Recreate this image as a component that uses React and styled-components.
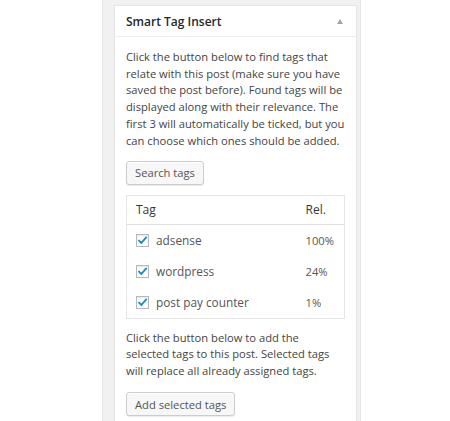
import React from 'react';
import styled, { createGlobalStyle } from 'styled-components';

const GlobalStyle = createGlobalStyle`
  html, body {
    margin: 0;
    padding: 0;
    background: #fff;
  }
  body {
    font-family: "Open Sans", "Liberation Sans", sans-serif;
    color: #444;
  }
`;

const Page = styled.div`
  display: flex;
  padding-left: 102px;
  height: 421px;
  overflow: hidden;
`;

const Sidebar = styled.div`
  width: 259px;
  box-sizing: border-box;
  background: #f1f1f1;
  border-left: 1px solid #e5e5e5;
  border-right: 1px solid #e5e5e5;
  padding: 5px 3px 0 11px;
`;

const Postbox = styled.div`
  background: #fff;
  border: 1px solid #e5e5e5;
  box-shadow: 0 1px 1px rgba(0, 0, 0, 0.04);
`;

const Header = styled.div`
  display: flex;
  align-items: center;
  justify-content: space-between;
  height: 30px;
  padding: 0 11px;
  border-bottom: 1px solid #eee;
`;

const Title = styled.h3`
  margin: 0;
  font-size: 12px;
  font-weight: 600;
  color: #23282d;
`;

const Toggle = styled.span`
  width: 0;
  height: 0;
  border-left: 3.5px solid transparent;
  border-right: 3.5px solid transparent;
  border-bottom: 5px solid #a0a5aa;
  margin-right: 2px;
`;

const Inside = styled.div`
  padding: 12px 11px 10px;
`;

const Text = styled.p`
  margin: 0 0 ${p => p.gap}px;
  font-size: 11.2px;
  line-height: 16.7px;
  color: #444;
`;

const Button = styled.button`
  display: inline-block;
  height: 24px;
  padding: 0 8px;
  font-family: inherit;
  font-size: 11.2px;
  color: #555;
  background: #f7f7f7;
  border: 1px solid #ccc;
  border-radius: 3px;
  box-shadow: inset 0 1px 0 #fff, 0 1px 0 rgba(0, 0, 0, 0.08);
  cursor: pointer;
  margin-bottom: ${p => p.gap || 0}px;
`;

const Table = styled.table`
  width: 100%;
  border-collapse: collapse;
  border: 1px solid #e5e5e5;
  font-size: 11.2px;
  margin-bottom: 11px;
`;

const HeadCell = styled.th`
  box-sizing: border-box;
  height: 29px;
  padding: 0 9px;
  text-align: left;
  font-weight: 400;
  font-size: 12px;
  color: #32373c;
  border-bottom: 1px solid #e1e1e1;
  width: ${p => p.w || 'auto'};
`;

const Cell = styled.td`
  height: 31px;
  padding: 0 9px;
  color: #555;
`;

const TagLabel = styled.label`
  display: flex;
  align-items: center;
  gap: 7px;
  font-size: 11.8px;
`;

const Check = styled.span`
  display: inline-flex;
  align-items: center;
  justify-content: center;
  width: 13px;
  height: 13px;
  box-sizing: border-box;
  border: 1px solid #b4b9be;
  background: #fff;
  box-shadow: inset 0 1px 2px rgba(0, 0, 0, 0.1);
`;

const CheckMark = () => (
  <svg width="11" height="11" viewBox="0 0 11 11">
    <path d="M2 5.6 L4.4 8 L9.2 2.4" fill="none" stroke="#1e8cbe" strokeWidth="1.9" strokeLinecap="round" strokeLinejoin="round" />
  </svg>
);

const tags = [
  { name: 'adsense', rel: '100%' },
  { name: 'wordpress', rel: '24%' },
  { name: 'post pay counter', rel: '1%' },
];

export default function App() {
  return (
    <>
      <GlobalStyle />
      <Page>
        <Sidebar>
          <Postbox>
            <Header>
              <Title>Smart Tag Insert</Title>
              <Toggle />
            </Header>
            <Inside>
              <Text gap={11}>
                Click the button below to find tags that relate with this post (make sure you have
                saved the post before). Found tags will be displayed along with their relevance. The
                first 3 will automatically be ticked, but you can choose which ones should be added.
              </Text>
              <Button gap={10}>Search tags</Button>
              <Table>
                <thead>
                  <tr>
                    <HeadCell>Tag</HeadCell>
                    <HeadCell w="48px">Rel.</HeadCell>
                  </tr>
                </thead>
                <tbody>
                  {tags.map(tag => (
                    <tr key={tag.name}>
                      <Cell>
                        <TagLabel>
                          <Check><CheckMark /></Check>
                          {tag.name}
                        </TagLabel>
                      </Cell>
                      <Cell>{tag.rel}</Cell>
                    </tr>
                  ))}
                </tbody>
              </Table>
              <Text gap={12}>
                Click the button below to add the<br />
                selected tags to this post. Selected tags<br />
                will replace all already assigned tags.
              </Text>
              <Button>Add selected tags</Button>
            </Inside>
          </Postbox>
        </Sidebar>
      </Page>
    </>
  );
}
